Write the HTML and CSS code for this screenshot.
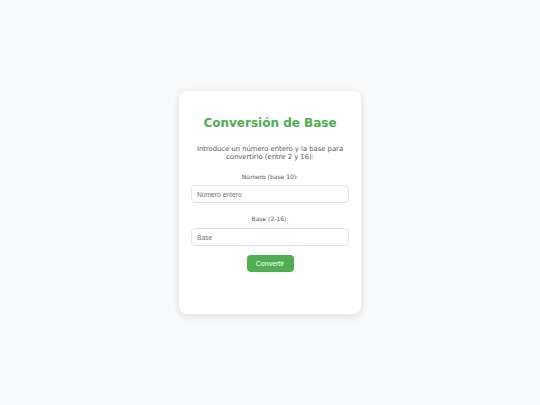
FILE: index.html
```html
<!DOCTYPE html>
<html lang="es">
<head>
<meta charset="utf-8">
<title>Conversión de Base</title>
<link rel="stylesheet" href="styles.css">
</head>
<body>
<div class="card">
  <h1 class="title">Conversión de Base</h1>
  <p class="intro">Introduce un número entero y la base para convertirlo (entre 2 y 16):</p>
  <label class="label" for="num">Número (base 10):</label>
  <input class="field" id="num" type="text" placeholder="Número entero">
  <label class="label label-second" for="base">Base (2-16):</label>
  <input class="field" id="base" type="text" placeholder="Base">
  <button class="btn">Convertir</button>
</div>
</body>
</html>
```
FILE: styles.css
```css
html, body {
  margin: 0;
  padding: 0;
}
body {
  background: #f8f9fa;
  height: 405px;
  display: flex;
  align-items: center;
  justify-content: center;
  font-family: "DejaVu Sans", Verdana, sans-serif;
}
.card {
  box-sizing: border-box;
  width: 182px;
  height: 223px;
  background: #fff;
  border-radius: 8px;
  box-shadow: 0 2px 8px rgba(0,0,0,0.12);
  padding: 25px 12px 12px;
  display: flex;
  flex-direction: column;
  align-items: center;
}
.title {
  margin: 0;
  color: #4caf50;
  font-size: 12px;
  font-weight: bold;
  line-height: 14px;
  white-space: nowrap;
}
.intro {
  margin: 15px 0 0;
  font-size: 6.8px;
  line-height: 8px;
  color: #555;
  text-align: center;
}
.label {
  margin-top: 12px;
  font-size: 6px;
  line-height: 8px;
  color: #555;
}
.field {
  box-sizing: border-box;
  width: 100%;
  height: 18px;
  margin-top: 4px;
  padding: 0 5px;
  border: 1px solid #e2e2e2;
  border-radius: 4px;
  font-family: "Liberation Sans", Arial, sans-serif;
  font-size: 6.7px;
  color: #333;
  outline: none;
}
.field::placeholder {
  color: #757575;
}
.label-second {
  margin-top: 12px;
}
.label-second + .field {
  margin-top: 5px;
}
.btn {
  margin-top: 9px;
  width: 47px;
  height: 17px;
  border: none;
  border-radius: 4px;
  background: #4caf50;
  color: #fff;
  font-family: "Liberation Sans", Arial, sans-serif;
  font-size: 7px;
  padding: 0;
}
```
